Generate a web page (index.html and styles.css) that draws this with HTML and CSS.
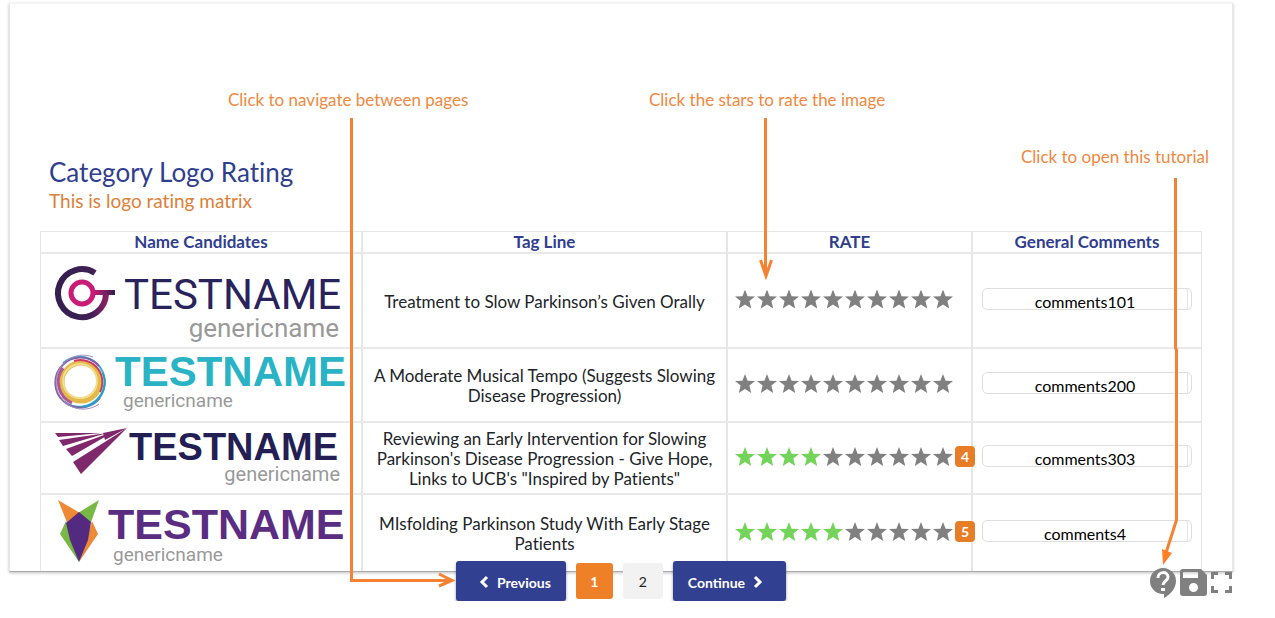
FILE: index.html
```
<!DOCTYPE html>
<html lang="en">
<head>
<meta charset="utf-8">
<meta name="viewport" content="width=device-width, initial-scale=1">
<title>Category Logo Rating</title>
<link rel="stylesheet" href="styles.css">
</head>
<body>
<main class="card">
  <h1 class="title">Category Logo Rating</h1>
  <p class="subtitle">This is logo rating matrix</p>
  <table class="matrix">
    <colgroup><col class="col-name"><col class="col-tag"><col class="col-rate"><col class="col-comment"></colgroup>
    <thead>
      <tr><th scope="col">Name Candidates</th><th scope="col">Tag Line</th><th scope="col">RATE</th><th scope="col">General Comments</th></tr>
    </thead>
    <tbody>
      <tr>
        <td>
          <svg class="logo" viewBox="0 0 320 93" role="img" aria-label="Testname genericname, ring mark">
            <defs>
              <linearGradient id="ring" x1="0" x2="1"><stop offset="0" stop-color="#33204f"/><stop offset=".7" stop-color="#3f2055"/><stop offset="1" stop-color="#8a1f63"/></linearGradient>
              <linearGradient id="bar" x1="0" x2="1"><stop offset="0" stop-color="#d01b77"/><stop offset="1" stop-color="#33204f"/></linearGradient>
            </defs>
            <path d="M54 19A24 24 0 1 0 65 40" fill="none" stroke="url(#ring)" stroke-width="6"/>
            <circle cx="41" cy="39" r="11" fill="none" stroke="#c91c76" stroke-width="5"/>
            <path d="M52 36H74V41H52Z" fill="url(#bar)"/>
            <text class="word-light" x="83" y="55" font-size="42" fill="#29235c">TESTNAME</text>
            <text class="generic" x="298" y="83" font-size="26" text-anchor="end">genericname</text>
          </svg>
        </td>
        <td class="tag">Treatment to Slow Parkinson’s Given Orally</td>
        <td><div class="rate"><button class="star" aria-label="1 star"></button><button class="star" aria-label="2 stars"></button><button class="star" aria-label="3 stars"></button><button class="star" aria-label="4 stars"></button><button class="star" aria-label="5 stars"></button><button class="star" aria-label="6 stars"></button><button class="star" aria-label="7 stars"></button><button class="star" aria-label="8 stars"></button><button class="star" aria-label="9 stars"></button><button class="star" aria-label="10 stars"></button></div></td>
        <td class="comment"><textarea rows="1" aria-label="General comments, row 1">comments101</textarea></td>
      </tr>
      <tr>
        <td>
          <svg class="logo" viewBox="0 0 320 72" role="img" aria-label="Testname genericname, swirl mark">
            <g fill="none">
              <circle cx="40" cy="33" r="19" stroke="#e3b94a" stroke-width="5"/>
              <circle cx="39" cy="32" r="17" stroke="#f2dc8a" stroke-width="2"/>
              <path d="M33 12A22 22 0 0 1 59 43" stroke="#cf3a62" stroke-width="2"/>
              <path d="M22 19A23 23 0 0 0 31 54" stroke="#b0568e" stroke-width="3"/>
              <path d="M22 14A25 25 0 1 1 24 53" stroke="#35b4cd" stroke-width="2"/>
              <path d="M58 17A25 25 0 1 0 59 49" stroke="#7d62a8" stroke-width="2"/>
              <path d="M52 8A27 27 0 1 0 58 55" stroke="#a98cc4" stroke-width="1"/>
              <path d="M62 24A25 25 0 0 1 42 58" stroke="#2a9cc4" stroke-width="2"/>
            </g>
            <text class="word-bold" x="74" y="37" font-size="42" fill="#2ab3c4">TESTNAME</text>
            <text class="generic" x="82" y="58" font-size="19">genericname</text>
          </svg>
        </td>
        <td class="tag">A Moderate Musical Tempo (Suggests Slowing Disease Progression)</td>
        <td><div class="rate"><button class="star" aria-label="1 star"></button><button class="star" aria-label="2 stars"></button><button class="star" aria-label="3 stars"></button><button class="star" aria-label="4 stars"></button><button class="star" aria-label="5 stars"></button><button class="star" aria-label="6 stars"></button><button class="star" aria-label="7 stars"></button><button class="star" aria-label="8 stars"></button><button class="star" aria-label="9 stars"></button><button class="star" aria-label="10 stars"></button></div></td>
        <td class="comment"><textarea rows="1" aria-label="General comments, row 2">comments200</textarea></td>
      </tr>
      <tr>
        <td>
          <svg class="logo" viewBox="0 0 320 70" role="img" aria-label="Testname genericname, wing mark">
            <g fill="#80286c">
              <path d="M14 10L60 10 17 14Z"/>
              <path d="M18 17L66 10 22 23Z"/>
              <path d="M25 26L74 8 31 33Z"/>
              <path d="M32 39L86 5 40 51Z"/>
              <path d="M62 10L86 5 64 17Z"/>
            </g>
            <text class="word-bold" x="88" y="37" font-size="38" fill="#231f54">TESTNAME</text>
            <text class="generic" x="299" y="58" font-size="20" text-anchor="end">genericname</text>
          </svg>
        </td>
        <td class="tag">Reviewing an Early Intervention for Slowing Parkinson's Disease Progression - Give Hope, Links to UCB's "Inspired by Patients"</td>
        <td><div class="rate"><button class="star on" aria-label="1 star"></button><button class="star on" aria-label="2 stars"></button><button class="star on" aria-label="3 stars"></button><button class="star on" aria-label="4 stars"></button><button class="star" aria-label="5 stars"></button><button class="star" aria-label="6 stars"></button><button class="star" aria-label="7 stars"></button><button class="star" aria-label="8 stars"></button><button class="star" aria-label="9 stars"></button><button class="star" aria-label="10 stars"></button><span class="score">4</span></div></td>
        <td class="comment"><textarea rows="1" aria-label="General comments, row 3">comments303</textarea></td>
      </tr>
      <tr>
        <td>
          <svg class="logo" viewBox="0 0 320 76" role="img" aria-label="Testname genericname, fox mark">
            <path d="M17 5L39 18 27 30Z" fill="#ee8a35"/>
            <path d="M58 5L37 18 49 30Z" fill="#78b943"/>
            <path d="M25 26L19 39 38 67Z" fill="#78b943"/>
            <path d="M51 26L57 39 38 67Z" fill="#ee8a35"/>
            <path d="M38 17L50 27 47 45 38 67 29 45 25 28Z" fill="#542a80"/>
            <text class="word-bold" x="67" y="44" font-size="43" fill="#5a2d82">TESTNAME</text>
            <text class="generic" x="72" y="66" font-size="19">genericname</text>
          </svg>
        </td>
        <td class="tag">MIsfolding Parkinson Study With Early Stage Patients</td>
        <td><div class="rate"><button class="star on" aria-label="1 star"></button><button class="star on" aria-label="2 stars"></button><button class="star on" aria-label="3 stars"></button><button class="star on" aria-label="4 stars"></button><button class="star on" aria-label="5 stars"></button><button class="star" aria-label="6 stars"></button><button class="star" aria-label="7 stars"></button><button class="star" aria-label="8 stars"></button><button class="star" aria-label="9 stars"></button><button class="star" aria-label="10 stars"></button><span class="score">5</span></div></td>
        <td class="comment"><textarea rows="1" aria-label="General comments, row 4">comments4</textarea></td>
      </tr>
    </tbody>
  </table>
</main>

<footer class="bar">
  <nav class="pager" aria-label="Pages">
    <button class="step"><svg width="10" height="14" viewBox="0 0 10 14" aria-hidden="true"><path d="M8 2L3 7 8 12"/></svg>Previous</button>
    <button class="page current" aria-current="page">1</button>
    <button class="page">2</button>
    <button class="step">Continue<svg width="10" height="14" viewBox="0 0 10 14" aria-hidden="true"><path d="M2 2L7 7 2 12"/></svg></button>
  </nav>
  <div class="tools">
    <button class="tool" aria-label="Open tutorial"><svg width="26" height="30" viewBox="0 0 26 30"><path fill="#808080" d="M13 0a13 13 0 0 0 0 26h1v4c7-4 12-10 12-17A13 13 0 0 0 13 0z"/><path d="M8 10c0-7 10-7 10-1 0 4-5 4-5 8" fill="none" stroke="#fff" stroke-width="3"/><path d="M11 20h4v3h-4z" fill="#fff"/></svg></button>
    <button class="tool" aria-label="Save"><svg width="27" height="27" viewBox="0 0 27 27"><path fill="#808080" fill-rule="evenodd" d="M3 0H21L27 6V24a3 3 0 0 1-3 3H3a3 3 0 0 1-3-3V3a3 3 0 0 1 3-3zM3 3V9H18V3zM13.500 14a4.500 4.500 0 1 0 0 9 4.500 4.500 0 0 0 0-9z"/></svg></button>
    <button class="tool" aria-label="Full screen"><svg width="21" height="21" viewBox="0 0 21 21"><path d="M1.500 7V1.500H7M14 1.500H19.500V7M19.500 14V19.500H14M7 19.500H1.500V14" fill="none" stroke="#808080" stroke-width="3"/></svg></button>
  </div>
</footer>

<div class="tour">
  <svg class="arrows" width="1275" height="618" viewBox="0 0 1275 618" aria-hidden="true">
    <g fill="none" stroke="#f58232" stroke-width="3">
      <path d="M351.500 118V580.500H450"/>
      <path d="M439 574L452 580.500 439 586"/>
      <path d="M765.500 118V272"/>
      <path d="M760.500 260L766 276 771.500 260"/>
      <path d="M1175.500 178V348L1176.500 350V520L1165 556"/>
    </g>
    <path d="M1162 549L1163 565 1172 553 1167 551Z" fill="#ff7f27"/>
  </svg>
  <p class="tip tip-pages">Click to navigate between pages</p>
  <p class="tip tip-stars">Click the stars to rate the image</p>
  <p class="tip tip-help">Click to open this tutorial</p>
</div>
</body>
</html>
```
FILE: styles.css
```
* { box-sizing: border-box; }

body {
  margin: 0;
  padding: 3px 42px 0 9px;
  position: relative;
  background: #fff;
  color: #212529;
  font: 17px/20px Lato, "Open Sans", sans-serif;
  font-variant-ligatures: none;
}

button, textarea { font-family: inherit; }
button { border: 0; padding: 0; cursor: pointer; }

.card {
  padding: 154px 30px 0;
  border: 1px solid #e6e6e6;
  border-top-color: #f4f4f4;
  border-bottom-color: #aaa;
  box-shadow: 0 1px 3px rgba(0, 0, 0, .25);
}

.title {
  margin: 0 0 0 9px;
  color: #2f3e8e;
  font-size: 26px;
  font-weight: 400;
  line-height: 28px;
}

.subtitle {
  margin: 4px 0 20px 9px;
  color: #dd8038;
  font-size: 19px;
  line-height: 21px;
}

.matrix {
  width: 100%;
  table-layout: fixed;
  border: 1px solid #e6e6e6;
  border-bottom: 0;
  border-spacing: 0;
}

/* Fixed layout shares the full width out in these proportions */
.col-name { width: 320px; }
.col-tag { width: 365px; }
.col-rate { width: 245px; }
.col-comment { width: 230px; }

.matrix th {
  padding: 0;
  color: #2f3e8e;
  line-height: 20px;
}

.matrix td {
  padding: 0;
  border-top: 2px solid #e9e9e9;
  text-align: center;
}

.matrix th + th,
.matrix td + td { border-left: 2px solid #e6e6e6; }

.matrix .tag { padding: 2px 8px 0; }

.logo { display: block; width: 100%; }
.word-light { font-family: Roboto, sans-serif; font-weight: 400; }
.word-bold { font-family: "Liberation Sans", sans-serif; font-weight: 700; }
.generic { font-family: Roboto, sans-serif; font-weight: 400; fill: #999; }

.rate {
  display: flex;
  align-items: center;
  gap: 2px;
  padding: 0 0 3px 7px;
}

.star {
  flex: none;
  width: 20px;
  height: 19px;
  background: #808080;
  clip-path: polygon(50% 0, 63% 35%, 100% 37%, 72% 61%, 81% 100%, 50% 79%, 19% 100%, 28% 61%, 0 37%, 37% 35%);
}
.star.on { background: #73d35a; }

.score {
  flex: none;
  width: 20px;
  height: 21px;
  border-radius: 4px;
  background: #e87d28;
  color: #fff;
  font-size: 14px;
  font-weight: 700;
  line-height: 21px;
  position: relative;
}

.matrix .comment { padding: 0 9px 4px; }

.comment textarea {
  display: block;
  width: 100%;
  height: 22px;
  padding: 3px 4px 0 0;
  border: 1px solid #dedede;
  border-radius: 5px;
  background: linear-gradient(#e4e4e4, #e4e4e4) right 3px top 0 / 1px 100% no-repeat #fff;
  color: #000;
  font-size: 16px;
  line-height: 20px;
  text-align: center;
  resize: none;
  overflow: hidden;
}

.bar {
  display: grid;
  grid-template-columns: 1fr auto 1fr;
  align-items: center;
  margin-top: -11px;
  position: relative;
}

.pager {
  grid-column: 2;
  display: flex;
  align-items: center;
  gap: 10px;
}

.step {
  display: flex;
  align-items: center;
  justify-content: center;
  gap: 8px;
  height: 40px;
  padding: 2px 15px 0 23px;
  border-radius: 3px;
  background: #324092;
  box-shadow: 0 2px 3px rgba(0, 0, 0, .4);
  color: #fff;
  font-size: 14px;
  font-weight: 700;
}
.step:last-child { padding: 2px 23px 0 15px; }
.step path { fill: none; stroke: #fff; stroke-width: 3; }

.page {
  width: 40px;
  height: 36px;
  border-radius: 3px;
  background: #f3f2f3;
  color: #222;
  font-size: 14px;
}
.page.current { width: 37px; background: #ee8028; color: #fff; font-weight: 700; }

.tools {
  display: flex;
  align-items: center;
  justify-content: flex-end;
  gap: 4px;
  padding: 3px 1px 0 0;
}
.tool { background: none; }
.tool svg { display: block; }

/* Tour labels and arrows float above the page */
.tour {
  position: absolute;
  top: 0;
  left: 0;
  pointer-events: none;
}
.arrows { display: block; }

.tip {
  position: absolute;
  margin: 0;
  color: #f0883e;
  font-size: 17px;
  line-height: 20px;
  white-space: nowrap;
}
.tip-pages { left: 228px; top: 90px; }
.tip-stars { left: 649px; top: 90px; }
.tip-help { left: 1021px; top: 147px; }
```
